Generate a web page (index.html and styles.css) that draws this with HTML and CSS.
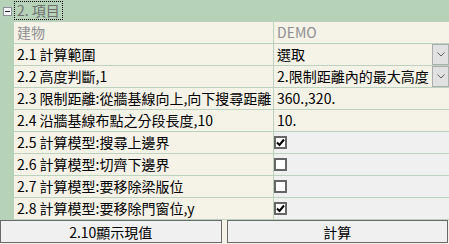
FILE: index.html
```html
<!DOCTYPE html>
<html lang="zh-Hant">
<head>
    <meta charset="UTF-8">
    <title>2. 項目</title>
    <link rel="stylesheet" href="styles.css">
</head>
<body>
    <div class="grid">
        <div class="head">
            <span class="toggle">
                <svg width="9" height="9" viewBox="0 0 9 9"><rect x="0.5" y="0.5" width="8" height="8" fill="#f4f6fa" stroke="#8a8f98"/><path d="M2 4.5h5" stroke="#222" stroke-width="1"/></svg>
            </span>
            <span class="caption">2. 項目</span>
        </div>
        <div class="row">
            <div class="label muted">建物</div>
            <div class="value muted">DEMO</div>
        </div>
        <div class="row">
            <div class="label">2.1 計算範圍</div>
            <div class="value combo">
                <span>選取</span>
                <span class="drop"><svg width="8" height="5" viewBox="0 0 8 5"><path d="M0.5 0.5L4 4L7.5 0.5" fill="none" stroke="#606060"/></svg></span>
            </div>
        </div>
        <div class="row">
            <div class="label">2.2 高度判斷,1</div>
            <div class="value combo">
                <span>2.限制距離內的最大高度</span>
                <span class="drop"><svg width="8" height="5" viewBox="0 0 8 5"><path d="M0.5 0.5L4 4L7.5 0.5" fill="none" stroke="#606060"/></svg></span>
            </div>
        </div>
        <div class="row">
            <div class="label">2.3 限制距離:從牆基線向上,向下搜尋距離</div>
            <div class="value">360.,320.</div>
        </div>
        <div class="row">
            <div class="label">2.4 沿牆基線布點之分段長度,10</div>
            <div class="value">10.</div>
        </div>
        <div class="row">
            <div class="label">2.5 計算模型:搜尋上邊界</div>
            <div class="value gray"><span class="check"><svg width="9" height="9" viewBox="0 0 9 9"><path d="M1 4.5L3.5 7L8 1.5" fill="none" stroke="#000" stroke-width="2"/></svg></span></div>
        </div>
        <div class="row">
            <div class="label">2.6 計算模型:切齊下邊界</div>
            <div class="value gray"><span class="check"></span></div>
        </div>
        <div class="row">
            <div class="label">2.7 計算模型:要移除梁版位</div>
            <div class="value gray"><span class="check"></span></div>
        </div>
        <div class="row">
            <div class="label">2.8 計算模型:要移除門窗位,y</div>
            <div class="value gray"><span class="check"><svg width="9" height="9" viewBox="0 0 9 9"><path d="M1 4.5L3.5 7L8 1.5" fill="none" stroke="#000" stroke-width="2"/></svg></span></div>
        </div>
    </div>
    <div class="actions">
        <button>2.10顯示現值</button>
        <button>計算</button>
    </div>
</body>
</html>
```

FILE: styles.css
```css
body {
    margin: 0;
    width: 449px;
    height: 244px;
    background: #f5f2e8;
    font-family: "Noto Sans CJK TC", "Noto Sans", sans-serif;
    font-size: 14px;
    color: #000;
    overflow: hidden;
}
.grid {
    background: #b6d3ba;
}
.head {
    height: 21px;
    display: flex;
    align-items: center;
    border-bottom: 1px solid #bcd2be;
}
.toggle {
    width: 14px;
    display: flex;
    justify-content: center;
    margin-top: 1px;
}
.caption {
    color: #6f6f6f;
    line-height: 17px;
    padding: 0 2px 0 2px;
    border: 1px dotted #000;
}
.row {
    display: grid;
    grid-template-columns: 259px 1fr;
    margin-left: 14px;
    height: 21px;
    border-bottom: 1px solid #bcd2be;
    line-height: 21px;
}
.label {
    background: #f5f2e8;
    padding-left: 3px;
    white-space: nowrap;
    overflow: hidden;
}
.value {
    background: #f5f2e8;
    border-left: 1px solid #bcd2be;
    padding-left: 3px;
    white-space: nowrap;
    display: flex;
    align-items: center;
}
.muted {
    color: #8f8f8f;
}
.gray {
    background: #f0f0f0;
    padding-left: 0;
}
.combo {
    justify-content: space-between;
}
.drop {
    width: 15px;
    height: 19px;
    background: #e1e1e1;
    border: 1px solid #adadad;
    display: flex;
    align-items: center;
    justify-content: center;
}
.check {
    box-sizing: border-box;
    width: 13px;
    height: 13px;
    border: 2px solid #666;
    background: #fff;
    display: flex;
    align-items: center;
    justify-content: center;
}
.actions {
    display: flex;
    gap: 5px;
    padding-right: 1px;
}
.actions button {
    flex: 1;
    height: 23px;
    margin: 0;
    padding: 0;
    background: #f0f0f0;
    border: 1px solid #6a6a6a;
    font-family: inherit;
    font-size: 14px;
    line-height: 20px;
    color: #000;
}
```
